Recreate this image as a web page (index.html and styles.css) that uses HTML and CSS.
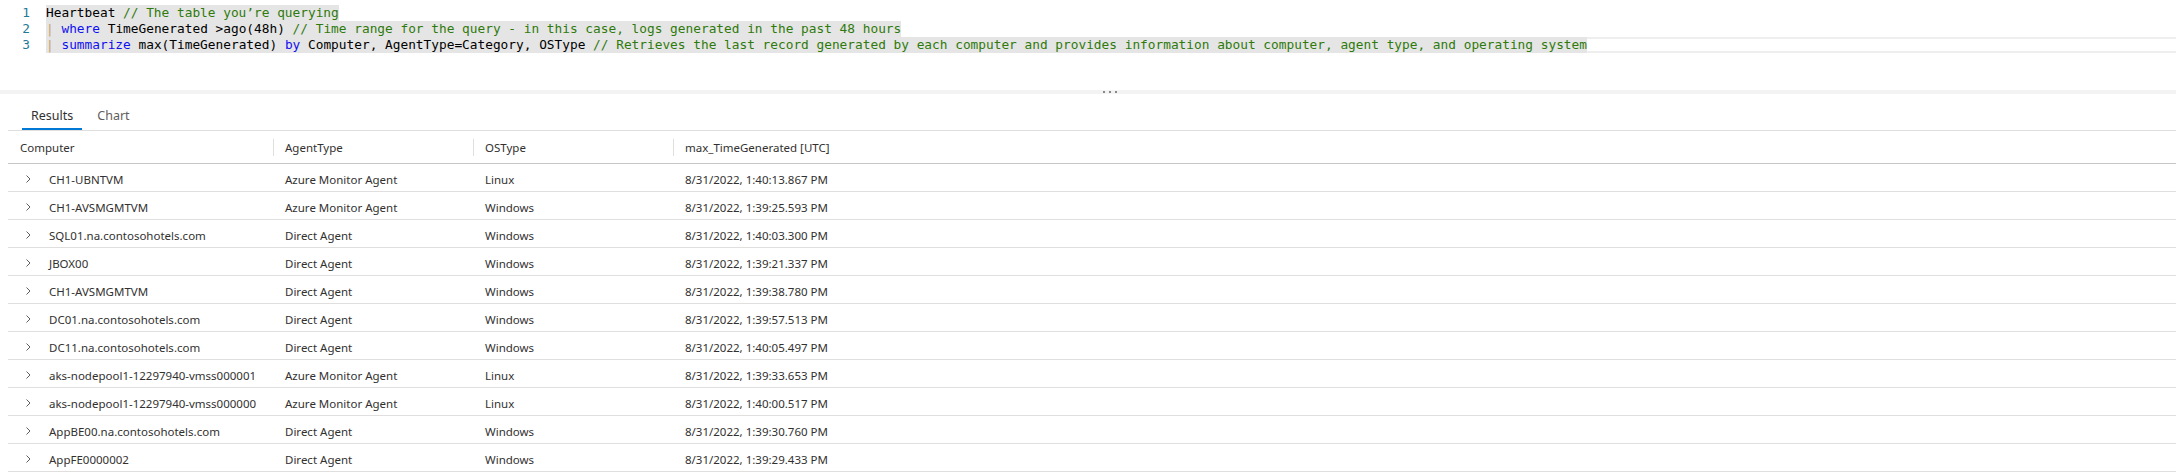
FILE: index.html
```html
<!DOCTYPE html>
<html>
<head>
<meta charset="utf-8">
<link rel="stylesheet" href="styles.css">
</head>
<body>
<div class="editor">
  <div class="line">
    <span class="ln">1</span>
    <span class="code"><span class="sel">Heartbeat <span class="cm">// The table you’re querying</span></span></span>
  </div>
  <div class="line">
    <span class="ln">2</span>
    <span class="code"><span class="sel"><span class="pipe">|</span> <span class="kw">where</span> TimeGenerated &gt;ago(48h) <span class="cm">// Time range for the query - in this case, logs generated in the past 48 hours</span></span></span>
  </div>
  <div class="line current">
    <span class="ln">3</span>
    <span class="code"><span class="sel"><span class="pipe">|</span> <span class="kw">summarize</span> max(TimeGenerated) <span class="kw">by</span> Computer, AgentType=Category, OSType <span class="cm">// Retrieves the last record generated by each computer and provides information about computer, agent type, and operating system</span></span></span>
  </div>
</div>

<div class="splitter"><span class="dot"></span><span class="dot"></span><span class="dot"></span></div>

<div class="results">
  <div class="tabs">
    <div class="tab active">Results</div>
    <div class="tab">Chart</div>
  </div>

  <div class="grid">
    <div class="row head">
      <div class="hc">Computer</div>
      <div class="hc sep">AgentType</div>
      <div class="hc sep">OSType</div>
      <div class="hc sep">max_TimeGenerated [UTC]</div>
    </div>

    <div class="row"><div class="c first"><svg class="chev" viewBox="0 0 8 8"><path d="M2.5 0.5 L6 4 L2.5 7.5"/></svg>CH1-UBNTVM</div><div class="c">Azure Monitor Agent</div><div class="c">Linux</div><div class="c">8/31/2022, 1:40:13.867 PM</div></div>
    <div class="row"><div class="c first"><svg class="chev" viewBox="0 0 8 8"><path d="M2.5 0.5 L6 4 L2.5 7.5"/></svg>CH1-AVSMGMTVM</div><div class="c">Azure Monitor Agent</div><div class="c">Windows</div><div class="c">8/31/2022, 1:39:25.593 PM</div></div>
    <div class="row"><div class="c first"><svg class="chev" viewBox="0 0 8 8"><path d="M2.5 0.5 L6 4 L2.5 7.5"/></svg>SQL01.na.contosohotels.com</div><div class="c">Direct Agent</div><div class="c">Windows</div><div class="c">8/31/2022, 1:40:03.300 PM</div></div>
    <div class="row"><div class="c first"><svg class="chev" viewBox="0 0 8 8"><path d="M2.5 0.5 L6 4 L2.5 7.5"/></svg>JBOX00</div><div class="c">Direct Agent</div><div class="c">Windows</div><div class="c">8/31/2022, 1:39:21.337 PM</div></div>
    <div class="row"><div class="c first"><svg class="chev" viewBox="0 0 8 8"><path d="M2.5 0.5 L6 4 L2.5 7.5"/></svg>CH1-AVSMGMTVM</div><div class="c">Direct Agent</div><div class="c">Windows</div><div class="c">8/31/2022, 1:39:38.780 PM</div></div>
    <div class="row"><div class="c first"><svg class="chev" viewBox="0 0 8 8"><path d="M2.5 0.5 L6 4 L2.5 7.5"/></svg>DC01.na.contosohotels.com</div><div class="c">Direct Agent</div><div class="c">Windows</div><div class="c">8/31/2022, 1:39:57.513 PM</div></div>
    <div class="row"><div class="c first"><svg class="chev" viewBox="0 0 8 8"><path d="M2.5 0.5 L6 4 L2.5 7.5"/></svg>DC11.na.contosohotels.com</div><div class="c">Direct Agent</div><div class="c">Windows</div><div class="c">8/31/2022, 1:40:05.497 PM</div></div>
    <div class="row"><div class="c first"><svg class="chev" viewBox="0 0 8 8"><path d="M2.5 0.5 L6 4 L2.5 7.5"/></svg>aks-nodepool1-12297940-vmss000001</div><div class="c">Azure Monitor Agent</div><div class="c">Linux</div><div class="c">8/31/2022, 1:39:33.653 PM</div></div>
    <div class="row"><div class="c first"><svg class="chev" viewBox="0 0 8 8"><path d="M2.5 0.5 L6 4 L2.5 7.5"/></svg>aks-nodepool1-12297940-vmss000000</div><div class="c">Azure Monitor Agent</div><div class="c">Linux</div><div class="c">8/31/2022, 1:40:00.517 PM</div></div>
    <div class="row"><div class="c first"><svg class="chev" viewBox="0 0 8 8"><path d="M2.5 0.5 L6 4 L2.5 7.5"/></svg>AppBE00.na.contosohotels.com</div><div class="c">Direct Agent</div><div class="c">Windows</div><div class="c">8/31/2022, 1:39:30.760 PM</div></div>
    <div class="row"><div class="c first"><svg class="chev" viewBox="0 0 8 8"><path d="M2.5 0.5 L6 4 L2.5 7.5"/></svg>AppFE0000002</div><div class="c">Direct Agent</div><div class="c">Windows</div><div class="c">8/31/2022, 1:39:29.433 PM</div></div>
  </div>
</div>
</body>
</html>
```

FILE: styles.css
```css
html, body {
  margin: 0;
  padding: 0;
  background: #ffffff;
  overflow: hidden;
}
body {
  width: 2176px;
  height: 472px;
  font-family: "Noto Sans", "Open Sans", sans-serif;
  color: #323130;
}

/* ---------- editor ---------- */
.editor {
  height: 90px;
  box-sizing: border-box;
  padding-top: 5px;
  font-family: "DejaVu Sans Mono", "Liberation Mono", monospace;
  font-size: 12.8px;
}
.line {
  display: flex;
  height: 16px;
  line-height: 16px;
  white-space: pre;
}
.ln {
  width: 30px;
  flex: none;
  text-align: right;
  color: #237893;
}
.code {
  flex: 1;
  margin-left: 16px;
  color: #000000;
}
.current .code {
  background: linear-gradient(#eeeeee 0, #eeeeee 2px, transparent 2px, transparent 14px, #eeeeee 14px);
}
.sel {
  display: inline-block;
  height: 16px;
  background: #e5e5e5;
}
.cm { color: #2f7a0c; }
.kw { color: #1010f0; }
.pipe { color: #c9a26b; }

/* ---------- splitter ---------- */
.splitter {
  height: 4px;
  background: #f3f3f3;
  display: flex;
  align-items: center;
  gap: 4px;
  padding-left: 1103px;
}
.dot {
  width: 2px;
  height: 2px;
  background: #8a8886;
}

/* ---------- results ---------- */
.results {
  margin-left: 8px;
}
.tabs {
  display: flex;
  gap: 6px;
  height: 37px;
  box-sizing: border-box;
  padding-left: 14px;
  border-bottom: 1px solid #e1dfdd;
}
.tab {
  box-sizing: border-box;
  height: 36px;
  padding: 13px 9px 0;
  font-size: 12.5px;
  line-height: 18px;
  color: #605e5c;
  border-bottom: 2px solid transparent;
}
.tab.active {
  color: #323130;
  border-bottom-color: #0078d4;
}

.row {
  display: grid;
  grid-template-columns: 265px 200px 200px 1fr;
  align-items: center;
  height: 28px;
  box-sizing: border-box;
  padding-top: 3px;
  border-bottom: 1px solid #e1dfdd;
  font-size: 11.5px;
  color: #323130;
}
.row.head {
  height: 33px;
  padding-top: 1px;
  border-bottom-color: #c8c6c4;
}
.hc {
  height: 17px;
  line-height: 17px;
  padding-left: 12px;
  box-sizing: border-box;
}
.hc.sep {
  border-left: 1px solid #e1dfdd;
  padding-left: 11px;
}
.c {
  padding-left: 12px;
  line-height: 17px;
  white-space: nowrap;
}
.c.first {
  display: flex;
  align-items: center;
  padding-left: 16px;
}
.chev {
  width: 8px;
  height: 8px;
  margin-right: 17px;
  flex: none;
}
.chev path {
  fill: none;
  stroke: #605e5c;
  stroke-width: 1;
}
```
